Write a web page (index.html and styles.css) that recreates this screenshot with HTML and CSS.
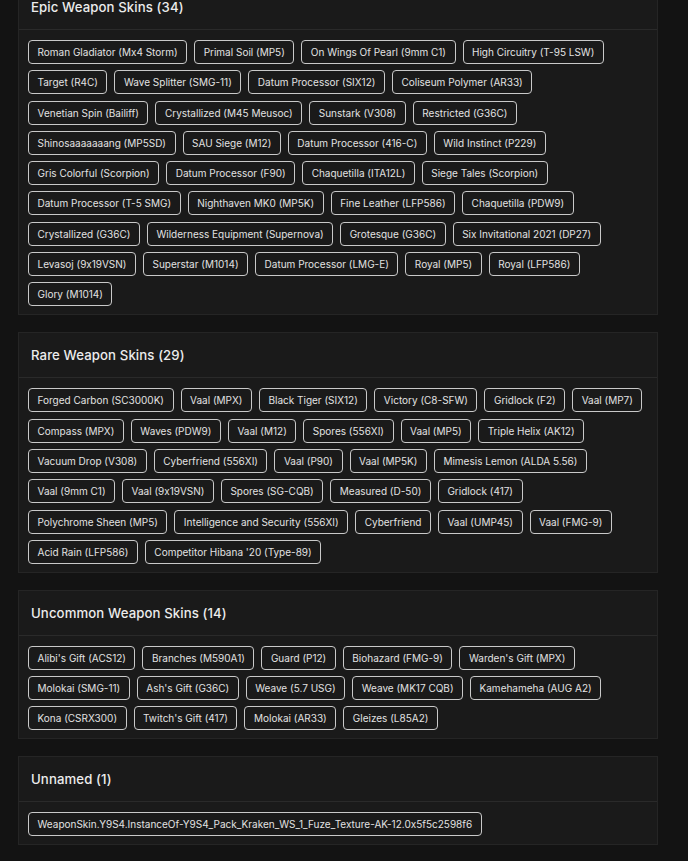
FILE: index.html
```html
<!DOCTYPE html>
<html lang="en">
<head>
<meta charset="utf-8">
<title>Weapon Skins</title>
<link rel="stylesheet" href="styles.css">
</head>
<body>
<main class="page">
  <section class="card">
    <h2 class="card-title">Epic Weapon Skins (34)</h2>
    <div class="chips">
      <span class="chip">Roman Gladiator (Mx4 Storm)</span>
      <span class="chip">Primal Soil (MP5)</span>
      <span class="chip">On Wings Of Pearl (9mm C1)</span>
      <span class="chip">High Circuitry (T-95 LSW)</span>
      <span class="chip">Target (R4C)</span>
      <span class="chip">Wave Splitter (SMG-11)</span>
      <span class="chip">Datum Processor (SIX12)</span>
      <span class="chip">Coliseum Polymer (AR33)</span>
      <span class="chip">Venetian Spin (Bailiff)</span>
      <span class="chip">Crystallized (M45 Meusoc)</span>
      <span class="chip">Sunstark (V308)</span>
      <span class="chip">Restricted (G36C)</span>
      <span class="chip">Shinosaaaaaaang (MP5SD)</span>
      <span class="chip">SAU Siege (M12)</span>
      <span class="chip">Datum Processor (416-C)</span>
      <span class="chip">Wild Instinct (P229)</span>
      <span class="chip">Gris Colorful (Scorpion)</span>
      <span class="chip">Datum Processor (F90)</span>
      <span class="chip">Chaquetilla (ITA12L)</span>
      <span class="chip">Siege Tales (Scorpion)</span>
      <span class="chip">Datum Processor (T-5 SMG)</span>
      <span class="chip">Nighthaven MK0 (MP5K)</span>
      <span class="chip">Fine Leather (LFP586)</span>
      <span class="chip">Chaquetilla (PDW9)</span>
      <span class="chip">Crystallized (G36C)</span>
      <span class="chip">Wilderness Equipment (Supernova)</span>
      <span class="chip">Grotesque (G36C)</span>
      <span class="chip">Six Invitational 2021 (DP27)</span>
      <span class="chip">Levasoj (9x19VSN)</span>
      <span class="chip">Superstar (M1014)</span>
      <span class="chip">Datum Processor (LMG-E)</span>
      <span class="chip">Royal (MP5)</span>
      <span class="chip">Royal (LFP586)</span>
      <span class="chip">Glory (M1014)</span>
    </div>
  </section>

  <section class="card">
    <h2 class="card-title">Rare Weapon Skins (29)</h2>
    <div class="chips">
      <span class="chip">Forged Carbon (SC3000K)</span>
      <span class="chip">Vaal (MPX)</span>
      <span class="chip">Black Tiger (SIX12)</span>
      <span class="chip">Victory (C8-SFW)</span>
      <span class="chip">Gridlock (F2)</span>
      <span class="chip">Vaal (MP7)</span>
      <span class="chip">Compass (MPX)</span>
      <span class="chip">Waves (PDW9)</span>
      <span class="chip">Vaal (M12)</span>
      <span class="chip">Spores (556XI)</span>
      <span class="chip">Vaal (MP5)</span>
      <span class="chip">Triple Helix (AK12)</span>
      <span class="chip">Vacuum Drop (V308)</span>
      <span class="chip">Cyberfriend (556XI)</span>
      <span class="chip">Vaal (P90)</span>
      <span class="chip">Vaal (MP5K)</span>
      <span class="chip">Mimesis Lemon (ALDA 5.56)</span>
      <span class="chip">Vaal (9mm C1)</span>
      <span class="chip">Vaal (9x19VSN)</span>
      <span class="chip">Spores (SG-CQB)</span>
      <span class="chip">Measured (D-50)</span>
      <span class="chip">Gridlock (417)</span>
      <span class="chip">Polychrome Sheen (MP5)</span>
      <span class="chip">Intelligence and Security (556XI)</span>
      <span class="chip">Cyberfriend</span>
      <span class="chip">Vaal (UMP45)</span>
      <span class="chip">Vaal (FMG-9)</span>
      <span class="chip">Acid Rain (LFP586)</span>
      <span class="chip">Competitor Hibana '20 (Type-89)</span>
    </div>
  </section>

  <section class="card">
    <h2 class="card-title">Uncommon Weapon Skins (14)</h2>
    <div class="chips">
      <span class="chip">Alibi's Gift (ACS12)</span>
      <span class="chip">Branches (M590A1)</span>
      <span class="chip">Guard (P12)</span>
      <span class="chip">Biohazard (FMG-9)</span>
      <span class="chip">Warden's Gift (MPX)</span>
      <span class="chip">Molokai (SMG-11)</span>
      <span class="chip">Ash's Gift (G36C)</span>
      <span class="chip">Weave (5.7 USG)</span>
      <span class="chip">Weave (MK17 CQB)</span>
      <span class="chip">Kamehameha (AUG A2)</span>
      <span class="chip">Kona (CSRX300)</span>
      <span class="chip">Twitch's Gift (417)</span>
      <span class="chip">Molokai (AR33)</span>
      <span class="chip">Gleizes (L85A2)</span>
    </div>
  </section>

  <section class="card">
    <h2 class="card-title">Unnamed (1)</h2>
    <div class="chips">
      <span class="chip">WeaponSkin.Y9S4.InstanceOf-Y9S4_Pack_Kraken_WS_1_Fuze_Texture-AK-12.0x5f5c2598f6</span>
    </div>
  </section>
</main>
</body>
</html>
```
FILE: styles.css
```css
html, body {
  margin: 0;
  padding: 0;
  background: #131313;
  color: #e6e6e6;
  font-family: Inter, "DejaVu Sans", sans-serif;
  font-feature-settings: "calt" 0;
}

.page {
  display: flex;
  flex-direction: column;
  gap: 17px;
  width: 640px;
  margin: -16px 0 16px 18px;
}

.card {
  background: #1a1a1a;
  border: 1px solid #252525;
}

.card-title {
  margin: 0;
  height: 44px;
  display: flex;
  align-items: center;
  padding: 0 12px;
  border-bottom: 1px solid #2a2a2a;
  font-size: 13.2px;
  font-weight: 500;
  color: #ececec;
  letter-spacing: 0.1px;
}

.chips {
  display: flex;
  flex-wrap: wrap;
  column-gap: 7px;
  row-gap: 6.3px;
  padding: 10px 9px 8px;
}

.chip {
  display: inline-flex;
  align-items: center;
  height: 22px;
  padding: 0 8.5px;
  border: 1px solid #c9c9c9;
  border-radius: 4px;
  font-size: 10px;
  color: #e2e2e2;
  white-space: nowrap;
}
```
